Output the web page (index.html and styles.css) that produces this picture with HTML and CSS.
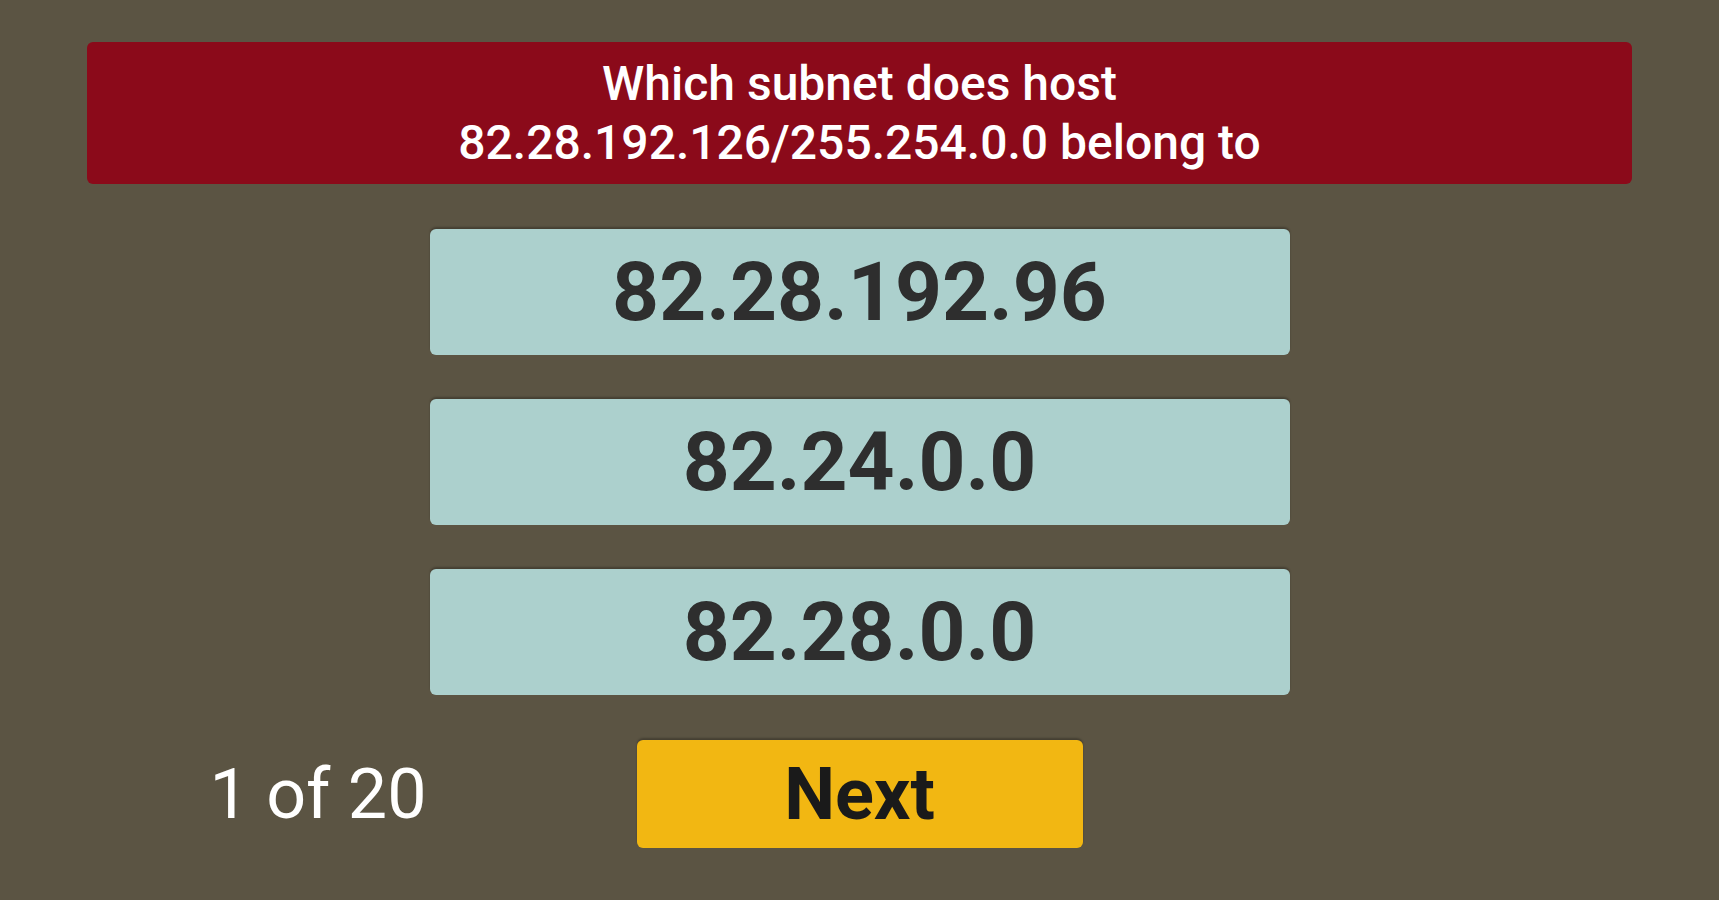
FILE: index.html
```html
<!DOCTYPE html>
<html lang="en">
<head>
    <meta charset="UTF-8">
    <meta name="viewport" content="width=device-width, initial-scale=1.0">
    <title>Subnet Quiz</title>
    <link rel="stylesheet" href="styles.css">
</head>
<body>
    <div class="quiz">
        <div class="question">
            Which subnet does host<br>
            82.28.192.126/255.254.0.0 belong to
        </div>

        <div class="answers">
            <button class="answer">82.28.192.96</button>
            <button class="answer">82.24.0.0</button>
            <button class="answer">82.28.0.0</button>
        </div>

        <div class="footer">
            <div class="counter">1 of 20</div>
            <button class="next-btn">Next</button>
            <div></div>
        </div>
    </div>
</body>
</html>
```

FILE: styles.css
```css
body {
    font-family: Roboto, "Liberation Sans", sans-serif;
    margin: 0;
    padding: 42px 0 0;
    background-color: #5b5443;
    min-height: 858px;
}
.quiz {
    width: 1545px;
    margin: 0 auto;
}
.question {
    background-color: #8b0a1a;
    color: #fff;
    border-radius: 6px;
    padding: 12px 20px;
    font-size: 48px;
    font-weight: 500;
    line-height: 59px;
    text-align: center;
}
.answers {
    display: flex;
    flex-direction: column;
    align-items: center;
    gap: 44px;
    margin-top: 45px;
}
.answer {
    width: 860px;
    height: 126px;
    border: none;
    border-radius: 6px;
    background-color: #acd0cd;
    color: #2e2e2e;
    font-family: inherit;
    font-size: 82px;
    font-weight: bold;
    box-shadow: 0 -2px 2px rgba(0,0,0,0.25);
    padding: 0;
}
.footer {
    display: grid;
    grid-template-columns: 1fr 446px 1fr;
    align-items: center;
    margin-top: 45px;
}
.counter {
    color: #fff;
    font-size: 70px;
    text-align: right;
    padding-right: 210px;
}
.next-btn {
    height: 108px;
    border: none;
    border-radius: 6px;
    background-color: #f2b712;
    color: #1a1a1a;
    font-family: inherit;
    font-size: 72px;
    font-weight: bold;
    box-shadow: 0 -2px 2px rgba(0,0,0,0.25);
    padding: 0;
}
```
